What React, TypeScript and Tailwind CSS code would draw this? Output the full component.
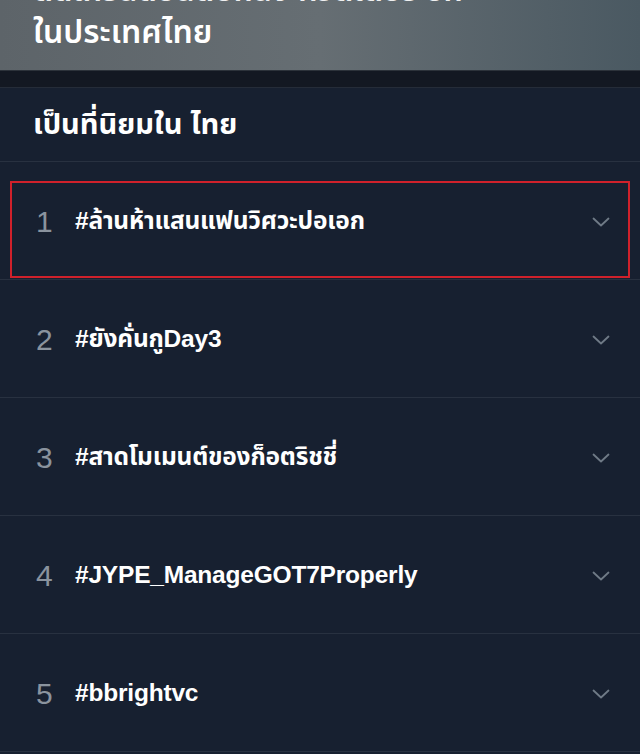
import React from "react";

const trends = [
  "#ล้านห้าแสนแฟนวิศวะปอเอก",
  "#ยังคั่นกูDay3",
  "#สาดโมเมนต์ของก็อตริชชี่",
  "#JYPE_ManageGOT7Properly",
  "#bbrightvc",
];

function Chevron() {
  return (
    <svg width="18" height="10" viewBox="0 0 18 10" fill="none">
      <path d="M1.5 1.5L9 8.5L16.5 1.5" stroke="#6f7a86" strokeWidth="1.8" strokeLinecap="round" strokeLinejoin="round" />
    </svg>
  );
}

export default function App() {
  return (
    <div
      className="w-[640px] h-[754px] overflow-hidden bg-[#172030] flex flex-col"
      style={{ fontFamily: '"Liberation Sans", "Noto Sans", "Noto Sans Thai", sans-serif' }}
    >
      <div className="h-[70px] shrink-0 overflow-hidden bg-gradient-to-r from-[#5d6469] via-[#666e73] to-[#4a5962] px-[33px]">
        <div className="mt-[-29px] h-[40px] text-[31px] leading-[40px] font-semibold text-white/90 whitespace-nowrap">
          ติดเทรนด์อันดับหนึ่ง ทวิตเตอร์ อีก
        </div>
        <div className="mt-[1px] h-[40px] text-[32px] leading-[40px] font-semibold text-white whitespace-nowrap">
          ในประเทศไทย
        </div>
      </div>
      <div className="h-[18px] shrink-0 bg-[#131822] border-t border-[#2c323a] border-b border-b-[#252c38]" />
      <div className="h-[74px] shrink-0 flex items-center px-[33px] border-b border-[#283140]">
        <span className="text-[29px] font-bold text-white">เป็นที่นิยมใน ไทย</span>
      </div>
      {trends.map((t, i) => (
        <div key={i} className="h-[118px] shrink-0 border-b border-[#283140] px-[10px] pt-[19px]">
          <div
            className={
              "h-[97px] flex items-center pl-[24px] pr-[18px] pb-[16px] " +
              (i === 0 ? "border-2 border-[#d0212b]" : "border-2 border-transparent")
            }
          >
            <span className="w-[39px] text-[30px] font-light text-[#8a939e]">{i + 1}</span>
            <span className="flex-1 text-[24.5px] font-bold text-white tracking-[-0.2px]">{t}</span>
            <Chevron />
          </div>
        </div>
      ))}
    </div>
  );
}
